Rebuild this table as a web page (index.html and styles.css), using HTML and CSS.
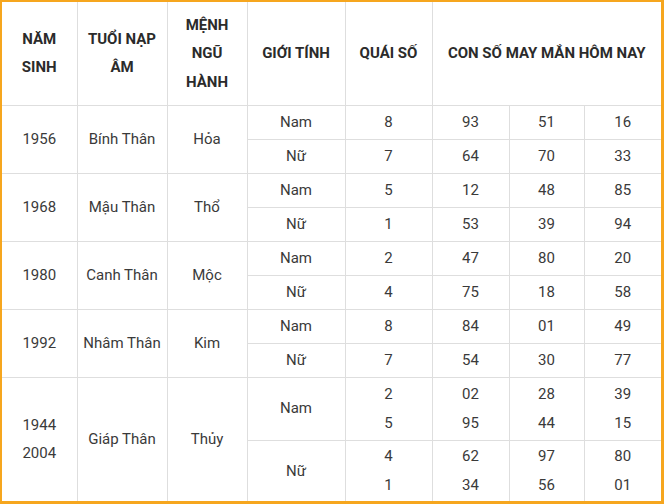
FILE: index.html
```html
<!DOCTYPE html>
<html lang="vi">
<head>
<meta charset="utf-8">
<link rel="stylesheet" href="styles.css">
</head>
<body>
<div class="frame">
<table class="lucky">
<colgroup>
<col class="c1"><col class="c2"><col class="c3"><col class="c4"><col class="c5"><col class="c6"><col class="c7"><col class="c8">
</colgroup>
<thead>
<tr class="head">
<th>NĂM<br>SINH</th>
<th>TUỔI NẠP<br>ÂM</th>
<th>MỆNH<br>NGŨ<br>HÀNH</th>
<th>GIỚI TÍNH</th>
<th>QUÁI SỐ</th>
<th colspan="3">CON SỐ MAY MẮN HÔM NAY</th>
</tr>
</thead>
<tbody>
<tr><td rowspan="2">1956</td><td rowspan="2">Bính Thân</td><td rowspan="2">Hỏa</td><td>Nam</td><td>8</td><td>93</td><td>51</td><td>16</td></tr>
<tr><td>Nữ</td><td>7</td><td>64</td><td>70</td><td>33</td></tr>
<tr><td rowspan="2">1968</td><td rowspan="2">Mậu Thân</td><td rowspan="2">Thổ</td><td>Nam</td><td>5</td><td>12</td><td>48</td><td>85</td></tr>
<tr><td>Nữ</td><td>1</td><td>53</td><td>39</td><td>94</td></tr>
<tr><td rowspan="2">1980</td><td rowspan="2">Canh Thân</td><td rowspan="2">Mộc</td><td>Nam</td><td>2</td><td>47</td><td>80</td><td>20</td></tr>
<tr><td>Nữ</td><td>4</td><td>75</td><td>18</td><td>58</td></tr>
<tr><td rowspan="2">1992</td><td rowspan="2">Nhâm Thân</td><td rowspan="2">Kim</td><td>Nam</td><td>8</td><td>84</td><td>01</td><td>49</td></tr>
<tr><td>Nữ</td><td>7</td><td>54</td><td>30</td><td>77</td></tr>
<tr class="tall1"><td rowspan="2">1944<br>2004</td><td rowspan="2">Giáp Thân</td><td rowspan="2">Thủy</td><td>Nam</td><td>2<br>5</td><td>02<br>95</td><td>28<br>44</td><td>39<br>15</td></tr>
<tr class="tall2"><td>Nữ</td><td>4<br>1</td><td>62<br>34</td><td>97<br>56</td><td>80<br>01</td></tr>
</tbody>
</table>
</div>
</body>
</html>
```
FILE: styles.css
```css
html, body {
  margin: 0;
  padding: 0;
  background: #fff;
}
.frame {
  width: 659px;
  height: 499px;
  border-style: solid;
  border-color: #f6a61e;
  border-width: 2px 3px 3px 2px;
  overflow: hidden;
}
.lucky {
  width: 659px;
  table-layout: fixed;
  border-collapse: collapse;
  font-family: Roboto, "Liberation Sans", sans-serif;
  font-size: 15px;
  line-height: 28.5px;
  color: #3a3a3a;
}
.c1 { width: 75px; }
.c2 { width: 90px; }
.c3 { width: 80px; }
.c4 { width: 98px; }
.c5 { width: 87px; }
.c6 { width: 77px; }
.c7 { width: 75px; }
.c8 { width: 77px; }
.lucky th, .lucky td {
  border: 1px solid #dedede;
  text-align: center;
  vertical-align: middle;
  padding: 0 2px;
}
.lucky tr > :first-child { border-left: none; }
.lucky tr > :last-child { border-right: none; }
.lucky thead th { border-top: none; }
.lucky tbody tr:last-child td { border-bottom: none; }
.lucky tbody tr.tall1 td:first-child { border-bottom: none; }
.lucky th {
  font-weight: 700;
  color: #2b2b2b;
}
.head { height: 103px; }
.lucky tbody tr { height: 34px; }
.lucky tbody tr.tall1 { height: 63px; }
.lucky tbody tr.tall2 { height: 61px; }
```
